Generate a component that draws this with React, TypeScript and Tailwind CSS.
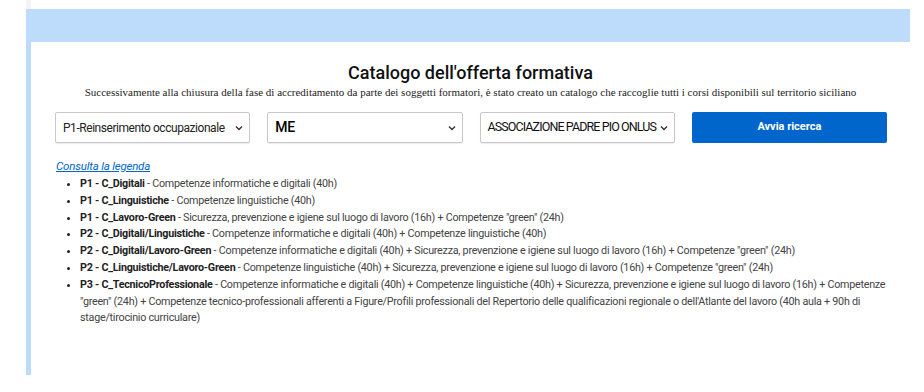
import React from "react";

const items: { label: string; text: string }[] = [
  { label: "P1 - C_Digitali", text: "Competenze informatiche e digitali (40h)" },
  { label: "P1 - C_Linguistiche", text: "Competenze linguistiche (40h)" },
  { label: "P1 - C_Lavoro-Green", text: "Sicurezza, prevenzione e igiene sul luogo di lavoro (16h) + Competenze \"green\" (24h)" },
  { label: "P2 - C_Digitali/Linguistiche", text: "Competenze informatiche e digitali (40h) + Competenze linguistiche (40h)" },
  { label: "P2 - C_Digitali/Lavoro-Green", text: "Competenze informatiche e digitali (40h) + Sicurezza, prevenzione e igiene sul luogo di lavoro (16h) + Competenze \"green\" (24h)" },
  { label: "P2 - C_Linguistiche/Lavoro-Green", text: "Competenze linguistiche (40h) + Sicurezza, prevenzione e igiene sul luogo di lavoro (16h) + Competenze \"green\" (24h)" },
  { label: "P3 - C_TecnicoProfessionale", text: "Competenze informatiche e digitali (40h) + Competenze linguistiche (40h) + Sicurezza, prevenzione e igiene sul luogo di lavoro (16h) + Competenze \"green\" (24h) + Competenze tecnico-professionali afferenti a Figure/Profili professionali del Repertorio delle qualificazioni regionale o dell'Atlante del lavoro (40h aula + 90h di stage/tirocinio curriculare)" },
];

function Chevron() {
  return (
    <svg width="8" height="6" viewBox="0 0 8 6" className="shrink-0">
      <path d="M1 1.5 L4 4.5 L7 1.5" fill="none" stroke="#333" strokeWidth="1.4" />
    </svg>
  );
}

function Select({ text, kind }: { text: string; kind: "normal" | "bold" | "caps" }) {
  const cls =
    kind === "bold"
      ? "text-[14px] font-medium text-black tracking-[-0.2px]"
      : kind === "caps"
      ? "text-[12.5px] text-[#111] tracking-[-0.9px]"
      : "text-[12px] text-[#222] tracking-[-0.45px]";
  return (
    <div className="h-[31px] flex items-center justify-between border border-[#c8c8c8] rounded-[2px] bg-white pl-[7px] pr-[6px] shadow-[0_1px_1px_rgba(0,0,0,0.08)]">
      <span className={"whitespace-nowrap " + cls}>{text}</span>
      <Chevron />
    </div>
  );
}

export default function App() {
  return (
    <div className="w-[924px] h-[392px] bg-white overflow-hidden" style={{ fontFamily: "Roboto, 'Noto Sans', sans-serif" }}>
      <div className="h-[9px] ml-[26px] w-[5px] bg-[#f4f4f4]" />
      <div className="ml-[26px] w-[884px]">
        <div className="h-[33px] bg-[#bddcfb]" />
        <div className="h-[333px] border-l-[5px] border-[#bddcfb] bg-white">
          <div className="pt-[20px] text-center">
            <h1 className="text-[18px] leading-[22px] font-medium text-[#111]">
              Catalogo dell'offerta formativa
            </h1>
            <p className="mt-[2px] text-[11px] leading-[12px] text-[#222]" style={{ fontFamily: "'Liberation Serif', serif" }}>
              Successivamente alla chiusura della fase di accreditamento da parte dei soggetti formatori, è stato creato un catalogo che raccoglie tutti i corsi disponibili sul territorio siciliano
            </p>
          </div>
          <div className="mt-[14px] ml-[24px] mr-[23px] grid grid-cols-4 gap-[17px]">
            <Select text="P1-Reinserimento occupazionale" kind="normal" />
            <Select text="ME" kind="bold" />
            <Select text="ASSOCIAZIONE PADRE PIO ONLUS" kind="caps" />
            <button className="h-[31px] bg-[#0066cc] rounded-[2px] text-white text-[11px] font-bold">Avvia ricerca</button>
          </div>
          <div className="mt-[16px] ml-[25px] mr-[12px]">
            <a className="text-[11.5px] italic underline text-[#0066cc] leading-[14px] block tracking-[-0.2px]">Consulta la legenda</a>
            <ul className="mt-[3px] pl-[24px] list-disc marker:text-[#222] text-[10.75px] leading-[16.8px] text-[#444] tracking-[-0.25px]">
              {items.map((it) => (
                <li key={it.label}>
                  <span className="font-bold text-[#222]">{it.label}</span> - {it.text}
                </li>
              ))}
            </ul>
          </div>
        </div>
      </div>
    </div>
  );
}
